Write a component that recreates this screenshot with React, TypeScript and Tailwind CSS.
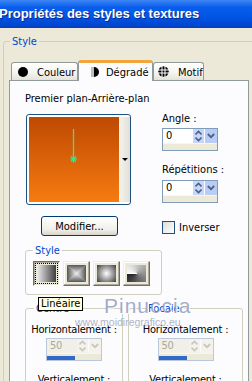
import React from 'react';

const FONT = "font-['DejaVu_Sans_Condensed','DejaVu_Sans',sans-serif] [font-stretch:condensed]";

const Chevrons: React.FC<{ color: string }> = ({ color }) => (
  <svg width="7" height="12" viewBox="0 0 7 12">
    <path d="M0.5 4.5 L3.5 1.5 L6.5 4.5 M0.5 7.5 L3.5 10.5 L6.5 7.5" fill="none" stroke={color} strokeWidth="1.6" />
  </svg>
);

const Chevron: React.FC<{ color: string }> = ({ color }) => (
  <svg width="8" height="6" viewBox="0 0 8 6">
    <path d="M0.8 1 L4 4.2 L7.2 1" fill="none" stroke={color} strokeWidth="1.8" />
  </svg>
);

const Spin: React.FC<{ value: string; disabled?: boolean }> = ({ value, disabled }) => (
  <div className={`w-[56px] h-[23px] border flex flex-col ${disabled ? 'border-[#B9C8DD]' : 'border-[#7F9DB9]'}`}>
    <div className="flex h-[14px]">
      <div className={`flex-1 text-[11px] leading-[14px] pl-[3px] ${disabled ? 'bg-[#F0EFE8] text-[#ACA899]' : 'bg-white text-black'}`}>{value}</div>
      <div className={`w-[11px] flex items-center justify-center ${disabled ? 'bg-[#F3F2EC]' : 'bg-[#C6D5FA]'}`}>
        <Chevrons color={disabled ? '#C9C7BA' : '#4D6185'} />
      </div>
      <div className={`w-[12px] ml-[1px] flex items-center justify-center ${disabled ? 'bg-[#F3F2EC]' : 'bg-[#B9CCF6]'}`}>
        <Chevron color={disabled ? '#C9C7BA' : '#4D6185'} />
      </div>
    </div>
    <div className="flex-1 bg-[#ECE9D8] border-t border-[#F7F6F1] flex items-end">
      {disabled && <div className="h-[4px] w-[28px] bg-[#316AC5]" />}
    </div>
  </div>
);

const StyleButton: React.FC<{ pressed?: boolean; children: React.ReactNode }> = ({ pressed, children }) => (
  <div
    className={`w-[27px] h-[25px] p-[3px] border ${
      pressed
        ? 'border-t-[#716F64] border-l-[#716F64] border-b-white border-r-white shadow-[inset_1px_1px_#ACA899]'
        : 'border-t-[#F1EFE2] border-l-[#F1EFE2] border-b-[#716F64] border-r-[#716F64] shadow-[inset_-1px_-1px_#ACA899,inset_1px_1px_#fff]'
    } bg-[#ECE9D8]`}
  >
    <div className={`w-full h-full ${pressed ? 'outline-1 outline-dotted outline-black outline-offset-[1px]' : ''}`}>{children}</div>
  </div>
);

const TabIconCircle = () => <span className="w-[10px] h-[10px] rounded-full bg-black" />;

const TabIconHalf = () => (
  <svg width="9" height="12" viewBox="0 0 9 12">
    <rect x="0" y="1" width="3" height="10" fill="#BEBEBE" />
    <path d="M3 1 A5 5 0 0 1 3 11 Z" fill="#000" />
  </svg>
);

const TabIconGrid = () => (
  <svg width="11" height="11" viewBox="0 0 11 11">
    <circle cx="5.5" cy="5.5" r="5.2" fill="#000" />
    <rect x="3.5" y="0" width="1" height="11" fill="#fff" />
    <rect x="6.5" y="0" width="1" height="11" fill="#fff" />
    <rect x="0" y="3.5" width="11" height="1" fill="#fff" />
    <rect x="0" y="6.5" width="11" height="1" fill="#fff" />
  </svg>
);

const RectGradient = () => (
  <svg width="100%" height="100%" viewBox="0 0 20 20" preserveAspectRatio="none">
    <defs>
      <linearGradient id="gt" x1="0" y1="0" x2="0" y2="1"><stop offset="0" stopColor="#555" /><stop offset="1" stopColor="#eee" /></linearGradient>
      <linearGradient id="gb" x1="0" y1="1" x2="0" y2="0"><stop offset="0" stopColor="#555" /><stop offset="1" stopColor="#eee" /></linearGradient>
      <linearGradient id="gl" x1="0" y1="0" x2="1" y2="0"><stop offset="0" stopColor="#555" /><stop offset="1" stopColor="#eee" /></linearGradient>
      <linearGradient id="gr" x1="1" y1="0" x2="0" y2="0"><stop offset="0" stopColor="#555" /><stop offset="1" stopColor="#eee" /></linearGradient>
    </defs>
    <polygon points="0,0 20,0 10,10" fill="url(#gt)" />
    <polygon points="0,20 20,20 10,10" fill="url(#gb)" />
    <polygon points="0,0 0,20 10,10" fill="url(#gl)" />
    <polygon points="20,0 20,20 10,10" fill="url(#gr)" />
  </svg>
);

const Group: React.FC<{ label: string; className?: string; legendClass?: string; children: React.ReactNode }> = ({ label, className = '', legendClass = '', children }) => (
  <fieldset className={`border border-[#D0D0BF] rounded-[3px] ${className}`}>
    <legend className={`px-[2px] text-[11px] leading-[13px] text-[#0046D5] ${legendClass}`}>{label}</legend>
    {children}
  </fieldset>
);

const Position: React.FC = () => (
  <div className="flex flex-col items-center pt-[8px] whitespace-nowrap tracking-[-0.2px]">
    <div>Horizontalement :</div>
    <div className="mt-[2px]"><Spin value="50" disabled /></div>
    <div className="mt-[12px]">Verticalement :</div>
  </div>
);

export default function App() {
  return (
    <div className={`relative w-[252px] h-[381px] overflow-hidden bg-[#ECE9D8] text-black ${FONT}`}>
      <div className="h-[28px] bg-[linear-gradient(to_bottom,#3D86F4_0%,#0A5EEC_25%,#0055E5_60%,#0047D2_88%,#0A3FB8_100%)] pt-[6px]">
        <div className="-ml-[1px] font-['Liberation_Sans',sans-serif] [font-stretch:normal] font-bold text-[13px] leading-[16px] text-white [text-shadow:1px_1px_#0B2A8A] whitespace-nowrap">
          Propriétés des styles et textures
        </div>
      </div>

      <fieldset className="mt-[7px] ml-[3px] w-[270px] h-[400px] border border-[#D0D0BF] rounded-[3px] pl-[5px]">
        <legend className="ml-[1px] px-[2px] text-[11px] leading-[13px] text-[#0046D5]">Style</legend>

        <div className="flex items-end mt-[11px] ml-[2px] h-[21px] relative z-10 text-[11px]">
          <div className="w-[67px] h-[18px] border border-b-0 border-[#919B9C] rounded-t-[3px] bg-[linear-gradient(to_bottom,#FFFFFF,#F3F3EF_60%,#E3E2DA)] flex items-center pl-[6px] gap-[9px]">
            <TabIconCircle />
            <span className="leading-[13px] pt-[2px]">Couleur</span>
          </div>
          <div className="w-[75px] h-[21px] -mb-[1px] border border-b-0 border-[#919B9C] border-t-[3px] border-t-[#F2A53C] rounded-t-[3px] bg-[#FCFCFE] flex items-center pl-[12px] gap-[6px]">
            <TabIconHalf />
            <span className="leading-[13px]">Dégradé</span>
          </div>
          <div className="w-[51px] h-[18px] border border-b-0 border-[#919B9C] rounded-t-[3px] bg-[linear-gradient(to_bottom,#FFFFFF,#F3F3EF_60%,#E3E2DA)] flex items-center pl-[4px] gap-[9px]">
            <TabIconGrid />
            <span className="leading-[13px] pt-[2px]">Motif</span>
          </div>
        </div>

        <div className="w-[240px] h-[320px] border border-[#919B9C] bg-[#FCFCFE] pl-[15px] pt-[11px] text-[11px] leading-[13px]">
          <div>Premier plan-Arrière-plan</div>

          <div className="flex mt-[7px]">
            <div className="w-[137px] pt-[2px] pl-[1px]">
              <div className="w-[105px] h-[91px] border border-[#1C5180] rounded-[3px] bg-white flex p-[2px] pr-0">
                <div className="relative w-[90px] h-full bg-[linear-gradient(to_bottom,#BE4902,#F77B10)]">
                  <svg className="absolute left-[40px] top-[12px]" width="9" height="35" viewBox="0 0 9 35">
                    <line x1="4.5" y1="0" x2="4.5" y2="30" stroke="#3FE08C" strokeWidth="1.3" />
                    <path d="M4.5 26 V34 M1 30 H8 M2 27.5 L7 32.5 M7 27.5 L2 32.5" stroke="#3FE08C" strokeWidth="1.2" />
                  </svg>
                </div>
                <div className="flex-1 bg-[linear-gradient(to_right,#F4F3EE,#E2E0D6)] flex items-center justify-center">
                  <span className="w-0 h-0 border-l-[3px] border-r-[3px] border-t-[3px] border-l-transparent border-r-transparent border-t-black" />
                </div>
              </div>
            </div>
            <div className="flex flex-col">
              <div>Angle :</div>
              <div className="mt-[3px]"><Spin value="0" /></div>
              <div className="mt-[12px]">Répétitions :</div>
              <div className="mt-[4px]"><Spin value="0" /></div>
            </div>
          </div>

          <div className="flex mt-[11px]">
            <div className="w-[137px] pl-[16px]">
              <div className="w-[77px] h-[20px] border border-[#003C74] rounded-[3px] bg-[linear-gradient(to_bottom,#FFFFFF,#F0EFEA_70%,#D8D4C8)] flex items-center justify-center">
                Modifier...
              </div>
            </div>
            <div className="flex items-center gap-[4px] mt-[5px] h-[13px]">
              <span className="w-[13px] h-[13px] border border-[#1C5180] bg-[linear-gradient(135deg,#DCDCD6,#FFFFFF)]" />
              <span>Inverser</span>
            </div>
          </div>

          <Group label="Style" className="w-[137px] mt-[8px] px-[7px] pb-[8px]">
            <div className="flex gap-[3px] mt-[4px]">
              <StyleButton pressed>
                <div className="w-full h-full bg-[linear-gradient(to_right,#EEEEEE,#3E3E3E)]" />
              </StyleButton>
              <StyleButton>
                <RectGradient />
              </StyleButton>
              <StyleButton>
                <div className="w-full h-full bg-[radial-gradient(circle,#FFFFFF,#8A8A8A_60%,#3A3A3A)]" />
              </StyleButton>
              <StyleButton>
                <div className="w-full h-full bg-[conic-gradient(from_270deg,#FFFFFF,#A8A8A8_40%,#5A5A5A_75%,#222222)]" />
              </StyleButton>
            </div>
          </Group>

          <div className="flex gap-[5px] mt-[7px]">
            <Group label="Centre" className="w-[98px] h-[90px] px-[2px]" legendClass="ml-[6px]">
              <Position />
            </Group>
            <Group label="Focale" className="w-[115px] h-[90px] px-[2px]" legendClass="ml-[15px]">
              <Position />
            </Group>
          </div>
        </div>
      </fieldset>

      <div className="absolute left-[38px] top-[297px] h-[14px] px-[2px] border border-black bg-[#FFFFE1] text-[11px] leading-[12px] z-20">
        Linéaire
      </div>

      <div className="absolute left-[104px] top-[294px] text-[21px] leading-[24px] tracking-[1px] text-[#8C95BA]/80 font-['Liberation_Sans',sans-serif] [font-stretch:normal] [text-shadow:1px_1px_#ffffff] z-30">
        Pinuccia
      </div>
      <div className="absolute left-[75px] top-[316px] text-[10.5px] leading-[12px] text-[#9AA0BC]/80 font-['Liberation_Sans',sans-serif] [font-stretch:normal] z-30">
        www.moidiregrafico.eu
      </div>
    </div>
  );
}
